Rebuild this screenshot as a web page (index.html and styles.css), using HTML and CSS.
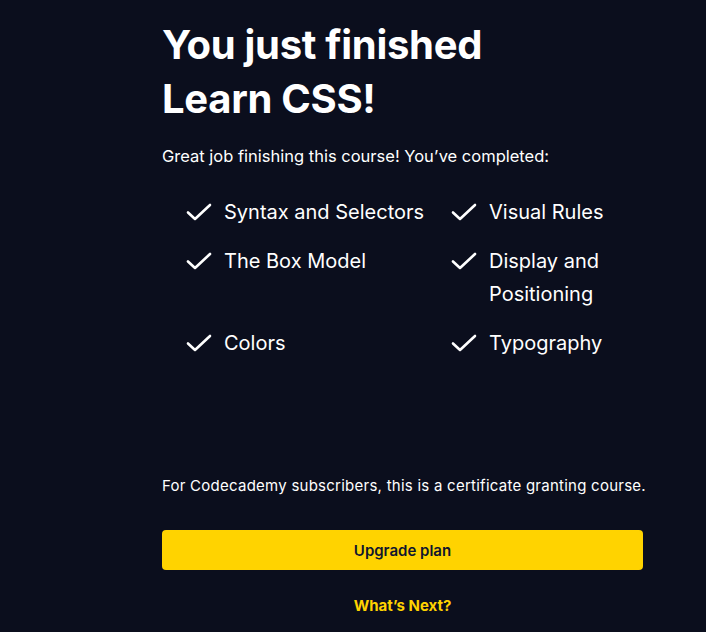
FILE: index.html
```html
<!DOCTYPE html>
<html lang="en">
<head>
<meta charset="utf-8">
<link rel="stylesheet" href="styles.css">
</head>
<body>
<main class="panel">
  <h1 class="title">You just finished<br>Learn CSS!</h1>
  <p class="intro">Great job finishing this course! You’ve completed:</p>
  <ul class="modules">
    <li class="module"><svg class="check" viewBox="0 0 26 18"><path d="M2 9.5 L9 16 L24 2"/></svg><span>Syntax and Selectors</span></li>
    <li class="module"><svg class="check" viewBox="0 0 26 18"><path d="M2 9.5 L9 16 L24 2"/></svg><span>Visual Rules</span></li>
    <li class="module"><svg class="check" viewBox="0 0 26 18"><path d="M2 9.5 L9 16 L24 2"/></svg><span>The Box Model</span></li>
    <li class="module"><svg class="check" viewBox="0 0 26 18"><path d="M2 9.5 L9 16 L24 2"/></svg><span>Display and Positioning</span></li>
    <li class="module"><svg class="check" viewBox="0 0 26 18"><path d="M2 9.5 L9 16 L24 2"/></svg><span>Colors</span></li>
    <li class="module"><svg class="check" viewBox="0 0 26 18"><path d="M2 9.5 L9 16 L24 2"/></svg><span>Typography</span></li>
  </ul>
  <p class="note">For Codecademy subscribers, this is a certificate granting course.</p>
  <button class="upgrade">Upgrade plan</button>
  <a class="next" href="#">What’s Next?</a>
</main>
</body>
</html>
```
FILE: styles.css
```css
html, body {
  margin: 0;
  padding: 0;
  background: #0b0e1d;
}
body {
  font-family: Inter, "Noto Sans", sans-serif;
  color: #ffffff;
  height: 632px;
  overflow: hidden;
}
.panel {
  width: 481px;
  margin-left: 162px;
  padding-top: 18px;
  display: flex;
  flex-direction: column;
}
.title {
  margin: 0;
  font-size: 40px;
  line-height: 54px;
  font-weight: 700;
  letter-spacing: -0.3px;
}
.intro {
  margin: 18px 0 0;
  font-size: 16.5px;
  line-height: 24px;
}
.modules {
  list-style: none;
  margin: 28px 0 0;
  padding: 0 0 0 24px;
  display: grid;
  grid-template-columns: 265px 165px;
  row-gap: 16px;
}
.module {
  display: flex;
  align-items: flex-start;
  gap: 12px;
  font-size: 20px;
  line-height: 33px;
}
.check {
  flex: none;
  width: 26px;
  height: 18px;
  margin-top: 7px;
  fill: none;
  stroke: #ffffff;
  stroke-width: 2.6;
  stroke-linecap: round;
  stroke-linejoin: round;
}
.note {
  margin: 114px 0 0;
  font-size: 15px;
  line-height: 24px;
  letter-spacing: 0.25px;
  white-space: nowrap;
}
.upgrade {
  margin-top: 32px;
  height: 40px;
  border: none;
  border-radius: 4px;
  background: #ffd300;
  color: #10162f;
  font-family: inherit;
  font-size: 15px;
  font-weight: 600;
}
.next {
  align-self: center;
  margin-top: 26px;
  color: #ffd300;
  font-size: 15px;
  font-weight: 700;
  text-decoration: none;
}
```
